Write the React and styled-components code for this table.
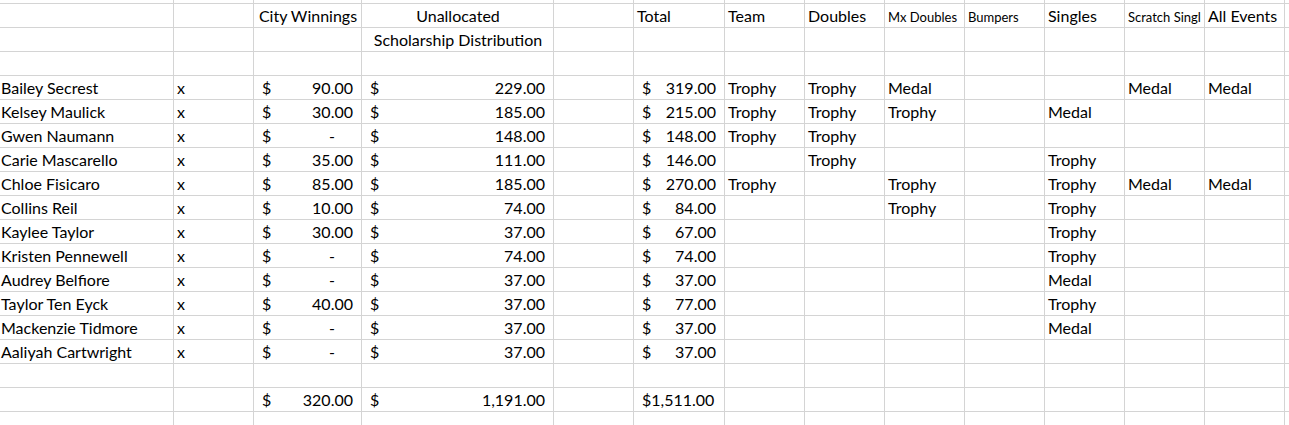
import React from 'react';
import styled, { createGlobalStyle } from 'styled-components';

/** Style */

const GlobalStyle = createGlobalStyle`
html, body {
    margin: 0;
    padding: 0;
    background: #ffffff;
    overflow: hidden;
}
body {
    font-family: Lato, "Liberation Sans", sans-serif;
    color: #000000;
}
`

const COLS = '174px 80px 108px 192px 80px 91px repeat(7, 80px) 1fr';

const Sheet = styled.div`
display: flex;
flex-direction: column;
width: 1289px;
height: 425px;
overflow: hidden;
`

const Row = styled.div`
display: grid;
grid-template-columns: ${COLS};
height: ${(props) => props.$height || 24}px;
flex-shrink: 0;
`

const Cell = styled.div`
display: flex;
align-items: flex-end;
justify-content: ${(props) => props.$align === 'center' ? 'center' : 'flex-start'};
border-right: 1px solid #d4d4d4;
border-bottom: 1px solid #d4d4d4;
padding: 0 ${(props) => props.$padRight ?? 2}px 3px ${(props) => props.$pad ?? 3}px;
font-size: ${(props) => props.$size || 16}px;
line-height: 1;
white-space: nowrap;
overflow: hidden;
min-width: 0;
`

const Money = styled(Cell)`
justify-content: space-between;
padding-left: 8px;
padding-right: 8px;
`

const Dash = styled.span`
margin-right: 18px;
`

/****/

const players = [
    ['Bailey Secrest', 90, 229, 319, 'Trophy', 'Trophy', 'Medal', '', '', 'Medal', 'Medal'],
    ['Kelsey Maulick', 30, 185, 215, 'Trophy', 'Trophy', 'Trophy', '', 'Medal', '', ''],
    ['Gwen Naumann', 0, 148, 148, 'Trophy', 'Trophy', '', '', '', '', ''],
    ['Carie Mascarello', 35, 111, 146, '', 'Trophy', '', '', 'Trophy', '', ''],
    ['Chloe Fisicaro', 85, 185, 270, 'Trophy', '', 'Trophy', '', 'Trophy', 'Medal', 'Medal'],
    ['Collins Reil', 10, 74, 84, '', '', 'Trophy', '', 'Trophy', '', ''],
    ['Kaylee Taylor', 30, 37, 67, '', '', '', '', 'Trophy', '', ''],
    ['Kristen Pennewell', 0, 74, 74, '', '', '', '', 'Trophy', '', ''],
    ['Audrey Belfiore', 0, 37, 37, '', '', '', '', 'Medal', '', ''],
    ['Taylor Ten Eyck', 40, 37, 77, '', '', '', '', 'Trophy', '', ''],
    ['Mackenzie Tidmore', 0, 37, 37, '', '', '', '', 'Medal', '', ''],
    ['Aaliyah Cartwright', 0, 37, 37, '', '', '', '', '', '', ''],
]

const fmt = (n) => n.toLocaleString('en-US', { minimumFractionDigits: 2, maximumFractionDigits: 2 })

function Amount({ value }) {
    return (
        <Money>
            <span>$</span>
            {value ? <span>{fmt(value)}</span> : <Dash>-</Dash>}
        </Money>
    )
}

function EmptyRow({ height }) {
    return (
        <Row $height={height}>
            {Array.from({ length: 14 }).map((_, i) => <Cell key={i} />)}
        </Row>
    )
}

export default function App() {
    const cityTotal = players.reduce((s, p) => s + p[1], 0)
    const scholarTotal = players.reduce((s, p) => s + p[2], 0)
    const grandTotal = players.reduce((s, p) => s + p[3], 0)

    return (
        <>
            <GlobalStyle />
            <Sheet>
                <EmptyRow height={4} />
                <Row>
                    <Cell />
                    <Cell />
                    <Cell $align="center">City Winnings</Cell>
                    <Cell $align="center">Unallocated</Cell>
                    <Cell />
                    <Cell>Total</Cell>
                    <Cell>Team</Cell>
                    <Cell>Doubles</Cell>
                    <Cell $size={13}>Mx Doubles</Cell>
                    <Cell $size={13}>Bumpers</Cell>
                    <Cell>Singles</Cell>
                    <Cell $size={13} $padRight={0}>Scratch Singl</Cell>
                    <Cell>All Events</Cell>
                    <Cell />
                </Row>
                <Row>
                    <Cell />
                    <Cell />
                    <Cell />
                    <Cell $align="center">Scholarship Distribution</Cell>
                    {Array.from({ length: 10 }).map((_, i) => <Cell key={i} />)}
                </Row>
                <EmptyRow />
                {players.map((p) => (
                    <Row key={p[0]}>
                        <Cell $pad={1}>{p[0]}</Cell>
                        <Cell>x</Cell>
                        <Amount value={p[1]} />
                        <Amount value={p[2]} />
                        <Cell />
                        <Amount value={p[3]} />
                        {p.slice(4).map((award, i) => <Cell key={i}>{award}</Cell>)}
                        <Cell />
                    </Row>
                ))}
                <EmptyRow />
                <Row>
                    <Cell />
                    <Cell />
                    <Amount value={cityTotal} />
                    <Amount value={scholarTotal} />
                    <Cell />
                    <Money><span>${fmt(grandTotal)}</span></Money>
                    {Array.from({ length: 8 }).map((_, i) => <Cell key={i} />)}
                </Row>
                <EmptyRow />
            </Sheet>
        </>
    )
}
